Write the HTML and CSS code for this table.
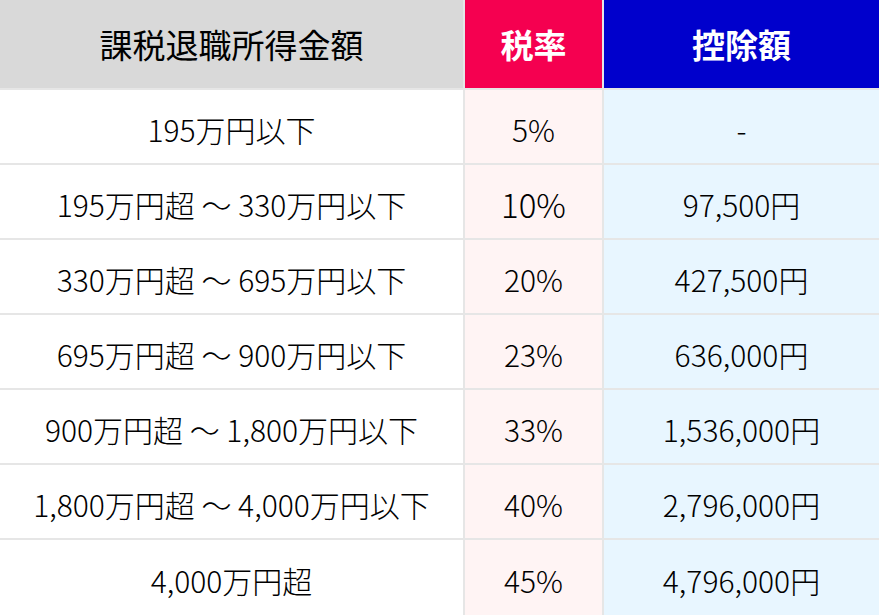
FILE: index.html
```html
<!DOCTYPE html>
<html lang="ja">
<head>
<meta charset="utf-8">
<link rel="stylesheet" href="styles.css">
</head>
<body>
<table class="tax">
  <thead>
    <tr>
      <th class="c-income">課税退職所得金額</th>
      <th class="c-rate">税率</th>
      <th class="c-ded">控除額</th>
    </tr>
  </thead>
  <tbody>
    <tr><td class="c-income">195万円以下</td><td class="c-rate">5%</td><td class="c-ded">-</td></tr>
    <tr><td class="c-income">195万円超 〜 330万円以下</td><td class="c-rate big">10%</td><td class="c-ded">97,500円</td></tr>
    <tr><td class="c-income">330万円超 〜 695万円以下</td><td class="c-rate">20%</td><td class="c-ded">427,500円</td></tr>
    <tr><td class="c-income">695万円超 〜 900万円以下</td><td class="c-rate">23%</td><td class="c-ded">636,000円</td></tr>
    <tr><td class="c-income">900万円超 〜 1,800万円以下</td><td class="c-rate">33%</td><td class="c-ded">1,536,000円</td></tr>
    <tr><td class="c-income">1,800万円超 〜 4,000万円以下</td><td class="c-rate">40%</td><td class="c-ded">2,796,000円</td></tr>
    <tr class="last"><td class="c-income">4,000万円超</td><td class="c-rate">45%</td><td class="c-ded">4,796,000円</td></tr>
  </tbody>
</table>
</body>
</html>
```
FILE: styles.css
```css
html, body {
  margin: 0;
  padding: 0;
  background: #ffffff;
}
.tax {
  width: 879px;
  border-collapse: collapse;
  table-layout: fixed;
  font-family: "Noto Sans CJK JP", "Noto Sans", sans-serif;
  color: #000;
}
.tax th, .tax td {
  padding: 0;
  text-align: center;
  vertical-align: middle;
}
.tax th {
  height: 88px;
  font-size: 33px;
  font-weight: 700;
  border-bottom: 2px solid #e6e6e6;
}
.tax th.c-income {
  width: 463px;
  background: #d9d9d9;
  color: #000;
  font-weight: 400;
  border-right: 2px solid #e6e6e6;
}
.tax th.c-rate {
  width: 137px;
  background: #f50050;
  color: #fff;
  border-right: 2px solid #e6e6e6;
}
.tax th.c-ded {
  background: #0000cc;
  color: #fff;
}
.tax td {
  height: 69px;
  padding-top: 4px;
  font-size: 30px;
  font-weight: 300;
  border-bottom: 2px solid #e6e6e6;
}
.tax tr.last td {
  height: 71px;
  border-bottom: none;
}
.tax td.c-income {
  background: #fff;
  border-right: 2px solid #e6e6e6;
}
.tax td.c-rate {
  background: #fff4f4;
  border-right: 2px solid #e6e6e6;
}
.tax td.c-rate.big {
  font-size: 33px;
}
.tax td.c-ded {
  background: #e8f6ff;
}
```
